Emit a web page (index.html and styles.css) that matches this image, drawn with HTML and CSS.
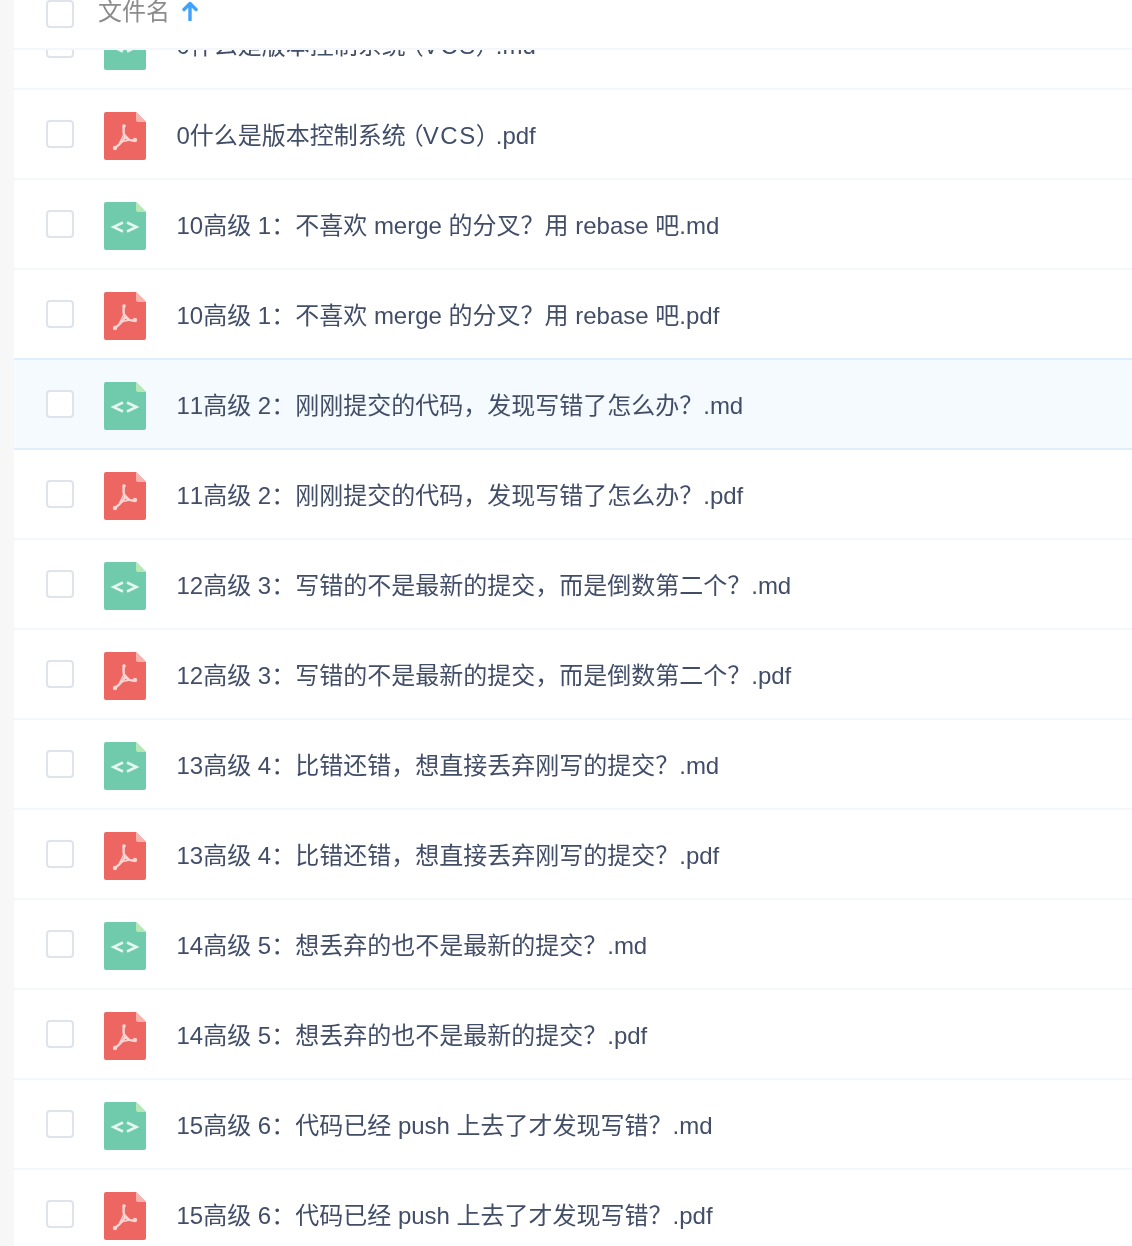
FILE: index.html
```html
<!DOCTYPE html>
<html lang="zh-CN">
<head>
    <meta charset="UTF-8">
    <title>文件列表</title>
    <link rel="stylesheet" href="styles.css">
</head>
<body>
    <svg class="sprites" width="0" height="0">
        <symbol id="icon-md" viewBox="0 0 42 48">
            <path d="M2 0H32L42 10V46a2 2 0 0 1-2 2H2a2 2 0 0 1-2-2V2a2 2 0 0 1 2-2z" fill="#6fcbac"/>
            <path d="M32 0L42 10H34a2 2 0 0 1-2-2z" fill="#b9e8b5"/>
            <path d="M19 20.5L9.5 25L19 29.5M23 20.5L32.5 25L23 29.5" fill="none" stroke="#e4f6ef" stroke-width="2.6"/>
        </symbol>
        <symbol id="icon-pdf" viewBox="0 0 42 48">
            <path d="M2 0H32L42 10V46a2 2 0 0 1-2 2H2a2 2 0 0 1-2-2V2a2 2 0 0 1 2-2z" fill="#ee6662"/>
            <path d="M32 0L42 10H34a2 2 0 0 1-2-2z" fill="#f6b4b0"/>
            <path d="M20 14C19 19 20 23 21 25C19 29 15 33 11 36M21 25C24 28 28 29 31 28" fill="none" stroke="#fad5d3" stroke-width="2.4" stroke-linecap="round"/>
            <path d="M20 22L16 30L26 28Z" fill="none" stroke="#fad5d3" stroke-width="1.4"/>
            <circle cx="20" cy="14" r="1.8" fill="#fad5d3"/>
            <circle cx="11" cy="36" r="2.2" fill="#fad5d3"/>
            <circle cx="31" cy="28" r="2.2" fill="#fad5d3"/>
        </symbol>
    </svg>

    <div class="page">
        <div class="list-header">
            <span class="checkbox"></span>
            <span class="header-name">文件名</span>
            <svg class="sort-arrow" width="16" height="20" viewBox="0 0 16 20">
                <path d="M8 19V3M2 8.5L8 2.5L14 8.5" fill="none" stroke="#3fa2fd" stroke-width="3.4" stroke-linecap="round" stroke-linejoin="round"/>
            </svg>
        </div>

        <ul class="file-list">
            <li class="file-row"><span class="checkbox"></span><svg class="file-icon"><use href="#icon-md"/></svg><span class="file-name">0什么是版本控制系统<span class="paren-open">（</span><span class="latin-wide">VCS</span><span class="paren-close">）</span>.md</span></li>
            <li class="file-row"><span class="checkbox"></span><svg class="file-icon"><use href="#icon-pdf"/></svg><span class="file-name">0什么是版本控制系统<span class="paren-open">（</span><span class="latin-wide">VCS</span><span class="paren-close">）</span>.pdf</span></li>
            <li class="file-row"><span class="checkbox"></span><svg class="file-icon"><use href="#icon-md"/></svg><span class="file-name">10高级 1：不喜欢 merge 的分叉？用 rebase 吧.md</span></li>
            <li class="file-row"><span class="checkbox"></span><svg class="file-icon"><use href="#icon-pdf"/></svg><span class="file-name">10高级 1：不喜欢 merge 的分叉？用 rebase 吧.pdf</span></li>
            <li class="file-row hover"><span class="checkbox"></span><svg class="file-icon"><use href="#icon-md"/></svg><span class="file-name">11高级 2：刚刚提交的代码，发现写错了怎么办？.md</span></li>
            <li class="file-row"><span class="checkbox"></span><svg class="file-icon"><use href="#icon-pdf"/></svg><span class="file-name">11高级 2：刚刚提交的代码，发现写错了怎么办？.pdf</span></li>
            <li class="file-row"><span class="checkbox"></span><svg class="file-icon"><use href="#icon-md"/></svg><span class="file-name">12高级 3：写错的不是最新的提交，而是倒数第二个？.md</span></li>
            <li class="file-row"><span class="checkbox"></span><svg class="file-icon"><use href="#icon-pdf"/></svg><span class="file-name">12高级 3：写错的不是最新的提交，而是倒数第二个？.pdf</span></li>
            <li class="file-row"><span class="checkbox"></span><svg class="file-icon"><use href="#icon-md"/></svg><span class="file-name">13高级 4：比错还错，想直接丢弃刚写的提交？.md</span></li>
            <li class="file-row"><span class="checkbox"></span><svg class="file-icon"><use href="#icon-pdf"/></svg><span class="file-name">13高级 4：比错还错，想直接丢弃刚写的提交？.pdf</span></li>
            <li class="file-row"><span class="checkbox"></span><svg class="file-icon"><use href="#icon-md"/></svg><span class="file-name">14高级 5：想丢弃的也不是最新的提交？.md</span></li>
            <li class="file-row"><span class="checkbox"></span><svg class="file-icon"><use href="#icon-pdf"/></svg><span class="file-name">14高级 5：想丢弃的也不是最新的提交？.pdf</span></li>
            <li class="file-row"><span class="checkbox"></span><svg class="file-icon"><use href="#icon-md"/></svg><span class="file-name">15高级 6：代码已经 push 上去了才发现写错？.md</span></li>
            <li class="file-row"><span class="checkbox"></span><svg class="file-icon"><use href="#icon-pdf"/></svg><span class="file-name">15高级 6：代码已经 push 上去了才发现写错？.pdf</span></li>
        </ul>
    </div>
</body>
</html>
```

FILE: styles.css
```css
html, body {
    margin: 0;
    height: 100%;
    overflow: hidden;
    background: #f7f7f7;
}

body {
    font-family: "Liberation Sans", "Noto Sans CJK SC", sans-serif;
    font-size: 24px;
    font-kerning: none;
    color: #424e67;
}

.sprites {
    display: block;
    height: 0;
}

.page {
    position: relative;
    height: 1246px;
    margin-left: 14px;
    overflow: hidden;
    background: #fff;
    filter: blur(0.35px);
}

.list-header {
    position: absolute;
    top: 0;
    left: 0;
    right: 0;
    z-index: 2;
    display: flex;
    align-items: flex-start;
    height: 48px;
    padding-left: 32px;
    background: #fff;
    border-bottom: 2px solid #f3f6fb;
}

.header-name {
    margin-left: 24px;
    line-height: 24px;
    color: #8c8c8c;
}

.sort-arrow {
    margin-left: 12px;
    margin-top: 1px;
}

.file-list {
    margin: 0;
    padding: 0;
    list-style: none;
}

.file-row {
    display: flex;
    align-items: center;
    box-sizing: border-box;
    height: 90px;
    padding-left: 32px;
    border-bottom: 2px solid #f3f6fb;
}

.file-row.hover {
    background: #f5faff;
    border-bottom-color: #e0edfb;
    box-shadow: 0 -2px 0 #e0edfb;
}

.checkbox {
    flex: none;
    box-sizing: border-box;
    width: 28px;
    height: 28px;
    background: #fff;
    border: 2px solid #dfe3ec;
    border-radius: 4px;
}

.file-icon {
    flex: none;
    width: 42px;
    height: 48px;
    margin-left: 30px;
    margin-top: 4px;
}

.file-name {
    margin-left: 30.5px;
    margin-top: -2px;
    white-space: nowrap;
}

.paren-open {
    margin-left: 5px;
    font-feature-settings: "palt";
}

.latin-wide {
    letter-spacing: 1.5px;
}

.paren-close {
    margin-right: 7px;
    font-feature-settings: "palt";
}
```
